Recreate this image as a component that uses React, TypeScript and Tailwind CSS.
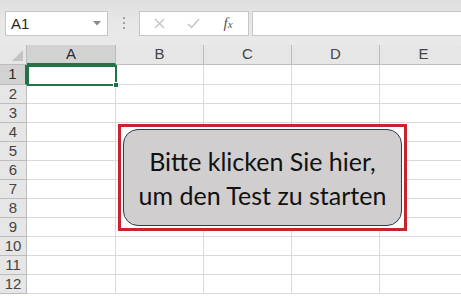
import React from "react";

const cols = ["A", "B", "C", "D", "E"];
const rows = [1, 2, 3, 4, 5, 6, 7, 8, 9, 10, 11, 12];

export default function App() {
  return (
    <div className="relative w-[461px] h-[296px] overflow-hidden bg-white font-['Liberation_Sans',Arial,sans-serif]">
      {/* Formula bar area */}
      <div className="h-[45px] bg-gradient-to-b from-[#dedede] via-[#e8e8e8] to-[#e9e9e9] flex items-center pl-[5px] pt-[1px]">
        <div className="w-[103px] h-[25px] bg-white border border-[#c6c6c6] flex items-center justify-between pl-[5px] pr-[6px]">
          <span className="text-[15px] text-[#262626] leading-none">A1</span>
          <svg width="8" height="5" viewBox="0 0 8 5">
            <path d="M0 0 L8 0 L4 4.5 Z" fill="#8a8a8a" />
          </svg>
        </div>
        <div className="w-[31px] flex flex-col items-center gap-[3px]">
          <span className="w-[2px] h-[2px] bg-[#a0a0a0]" />
          <span className="w-[2px] h-[2px] bg-[#a0a0a0]" />
          <span className="w-[2px] h-[2px] bg-[#a0a0a0]" />
        </div>
        <div className="w-[110px] h-[25px] bg-white border border-[#c6c6c6] flex items-center">
          <div className="w-[38px] flex justify-center">
            <svg width="11" height="11" viewBox="0 0 11 11">
              <path d="M1 1 L10 10 M10 1 L1 10" stroke="#c4c4c4" strokeWidth="1.4" />
            </svg>
          </div>
          <div className="w-[30px] flex justify-center">
            <svg width="13" height="11" viewBox="0 0 13 11">
              <path d="M1 6 L4.5 9.5 L12 1" stroke="#c4c4c4" strokeWidth="1.5" fill="none" />
            </svg>
          </div>
          <div className="flex-1 flex justify-center">
            <span className="font-['Liberation_Serif',serif] italic text-[15px] text-[#555] leading-none">
              f<span className="text-[11px]">x</span>
            </span>
          </div>
        </div>
        <div className="ml-[3px] flex-1 h-[25px] bg-white border border-r-0 border-[#c6c6c6]" />
      </div>

      {/* Sheet grid */}
      <div className="flex flex-col">
        <div className="flex h-[20px]">
          <div className="w-[27px] shrink-0 bg-[#e6e6e6] border-r border-b border-[#bcbcbc] relative">
            <svg className="absolute right-[3px] bottom-[3px]" width="11" height="11" viewBox="0 0 11 11">
              <path d="M11 0 L11 11 L0 11 Z" fill="#c3c3c3" />
            </svg>
          </div>
          {cols.map((c, i) => (
            <div
              key={c}
              className={
                i === 0
                  ? "w-[89px] shrink-0 flex items-center justify-center bg-[#d2d2d2] border-r border-b-2 border-r-[#bcbcbc] border-b-[#217346] text-[15px] text-[#2b2b2b]"
                  : "w-[88px] shrink-0 flex items-center justify-center bg-[#e6e6e6] border-r border-b border-[#bcbcbc] text-[15px] text-[#444]"
              }
            >
              {c}
            </div>
          ))}
        </div>
        {rows.map((r) => (
          <div key={r} className={r === 1 ? "flex h-[20px]" : "flex h-[19px]"}>
            <div
              className={
                r === 1
                  ? "w-[27px] shrink-0 flex items-center justify-center bg-[#d2d2d2] border-r-2 border-b border-r-[#217346] border-b-[#bcbcbc] text-[15px] text-[#2b2b2b]"
                  : "w-[27px] shrink-0 flex items-center justify-center bg-[#e6e6e6] border-r border-b border-[#bcbcbc] text-[15px] text-[#444]"
              }
            >
              {r}
            </div>
            {cols.map((c, i) => (
              <div
                key={c}
                className={
                  i === 0
                    ? "w-[89px] shrink-0 border-r border-b border-[#d9d9d9]"
                    : "w-[88px] shrink-0 border-r border-b border-[#d9d9d9]"
                }
              />
            ))}
          </div>
        ))}
      </div>

      {/* Active cell A1 */}
      <div className="absolute left-[27px] top-[65px] w-[90px] h-[21px] border-2 border-[#217346]">
        <span className="absolute -right-[4px] -bottom-[4px] w-[6px] h-[6px] bg-[#217346] border border-white" />
      </div>

      {/* Shape button with red selection frame */}
      <div className="absolute left-[118px] top-[124px] w-[289px] h-[107px] border-[3px] border-[#c8242f] bg-white p-[2px]">
        <div className="w-full h-full rounded-[15px] border border-[#2f3b52] bg-[#d0cece] flex flex-col items-center justify-center font-['Lato',sans-serif] text-[25px] leading-[34px] text-[#111]">
          <span>Bitte klicken Sie hier,</span>
          <span>um den Test zu starten</span>
        </div>
      </div>
    </div>
  );
}
